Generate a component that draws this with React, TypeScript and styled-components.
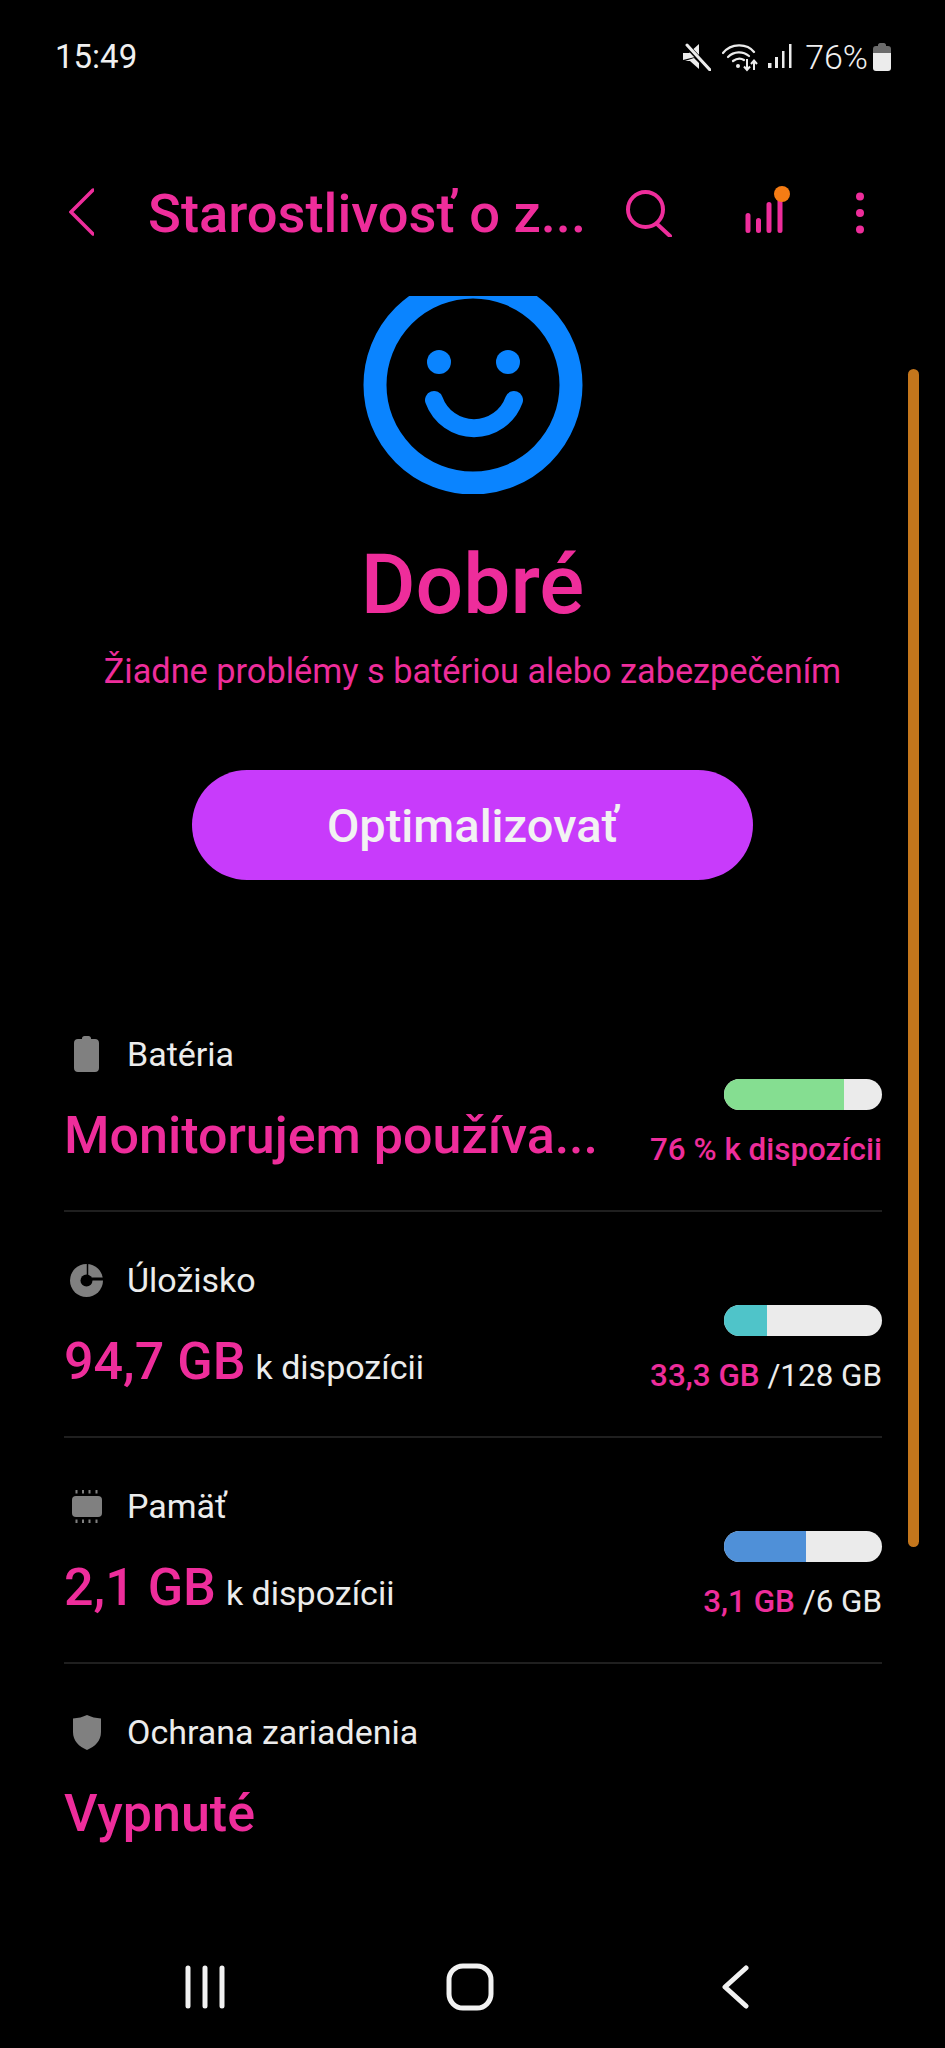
import { FC, ReactNode } from 'react'
import styled, { createGlobalStyle } from 'styled-components'

const PINK = '#ee2d9b'
const GRAY = '#808080'
const LIGHT = '#ececec'

const GlobalStyle = createGlobalStyle`
  html, body {
    margin: 0;
    background: #000;
  }
  * {
    box-sizing: border-box;
  }
`

const Screen = styled.div`
  width: 945px;
  height: 2048px;
  background: #000;
  color: ${LIGHT};
  font-family: Roboto, 'Liberation Sans', sans-serif;
  display: flex;
  flex-direction: column;
  overflow: hidden;
`

const StatusBar = styled.div`
  height: 112px;
  flex: none;
  display: flex;
  align-items: flex-start;
  justify-content: space-between;
  padding: 37px 54px 0 55px;
`

const Time = styled.div`
  font-size: 33px;
  line-height: 40px;
  color: #f0f0f0;
`

const StatusIcons = styled.div`
  display: flex;
  align-items: flex-start;
`

const StatusIcon = styled.svg<{ $gap: number }>`
  display: block;
  flex: none;
  margin: 6px 0 0 ${(p) => p.$gap}px;
`

const BatteryText = styled.div`
  font-size: 34px;
  line-height: 40px;
  font-weight: 300;
  color: #f0f0f0;
  margin-left: 13px;
`

const Header = styled.div`
  height: 184px;
  flex: none;
  display: flex;
  align-items: flex-start;
  padding: 76px 0 0 69px;
`

const HeaderIcon = styled.svg<{ $left: number; $top?: number }>`
  display: block;
  flex: none;
  margin-left: ${(p) => p.$left}px;
  margin-top: ${(p) => p.$top ?? 0}px;
`

const Title = styled.div`
  width: 437px;
  flex: none;
  margin: -1px 0 0 54px;
  font-size: 54.300px;
  line-height: 54px;
  font-weight: 500;
  color: ${PINK};
  white-space: nowrap;
`

const Scroller = styled.div`
  flex: 1;
  position: relative;
  overflow: hidden;
`

const ScrollThumb = styled.div`
  position: absolute;
  left: 908px;
  top: 73px;
  width: 11px;
  height: 1178px;
  border-radius: 6px;
  background: #c4761c;
`

const Hero = styled.div`
  display: flex;
  flex-direction: column;
  align-items: center;
`

const Face = styled.svg`
  display: block;
`

const Mood = styled.div`
  margin-top: 41px;
  font-size: 84px;
  line-height: 100px;
  font-weight: 500;
  color: ${PINK};
`

const Summary = styled.div`
  margin-top: 16px;
  font-size: 34.300px;
  line-height: 40px;
  color: ${PINK};
`

const OptimizeButton = styled.button`
  margin-top: 79px;
  width: 561px;
  height: 110px;
  border: 0;
  border-radius: 55px;
  background: #c83bfb;
  color: #f2f2f2;
  font-family: inherit;
  font-size: 47px;
  font-weight: 500;
`

const List = styled.div`
  margin: 106px 63px 0 64px;
`

const RowWrap = styled.div<{ $last?: boolean }>`
  height: 226px;
  display: flex;
  justify-content: space-between;
  border-bottom: 2px solid ${(p) => (p.$last ? 'transparent' : '#1f1f1f')};
`

const RowLeft = styled.div`
  padding-top: 48px;
`

const RowLabel = styled.div`
  display: flex;
  align-items: center;
  height: 40px;
  font-size: 34px;
  color: ${LIGHT};
`

const IconBox = styled.div`
  width: 45px;
  margin-right: 18px;
  display: flex;
  justify-content: center;
`

const RowValue = styled.div`
  margin-top: 32px;
  font-size: 52px;
  line-height: 60px;
  font-weight: 500;
  color: ${PINK};
  white-space: nowrap;
`

const ValueTail = styled.span`
  font-size: 34px;
  font-weight: 400;
  color: ${LIGHT};
  margin-left: 10px;
`

const RowRight = styled.div`
  padding-top: 93px;
  display: flex;
  flex-direction: column;
  align-items: flex-end;
`

const Bar = styled.div`
  width: 158px;
  height: 31px;
  border-radius: 16px;
  background: #ebebeb;
  overflow: hidden;
`

const BarFill = styled.div<{ $color: string }>`
  height: 100%;
  background: ${(p) => p.$color};
`

const BarText = styled.div`
  margin-top: 20px;
  font-size: 31.400px;
  line-height: 40px;
  color: ${LIGHT};
  white-space: nowrap;
`

const BarStrong = styled.span`
  font-weight: 500;
  color: ${PINK};
`

const NavBar = styled.div`
  height: 134px;
  flex: none;
  display: grid;
  grid-template-columns: repeat(3, 265px);
  justify-content: center;
  justify-items: center;
  padding: 51px 5px 0 0;
`

const NavIcon = styled.svg<{ $top?: number }>`
  display: block;
  margin-top: ${(p) => p.$top ?? 0}px;
`

interface RowProps {
  icon: ReactNode
  label: string
  value: ReactNode
  percent?: number
  color?: string
  info?: ReactNode
  last?: boolean
}

const Row: FC<RowProps> = ({ icon, label, value, percent, color, info, last }) => (
  <RowWrap $last={last}>
    <RowLeft>
      <RowLabel>
        <IconBox>{icon}</IconBox>
        {label}
      </RowLabel>
      <RowValue>{value}</RowValue>
    </RowLeft>
    {percent !== undefined && color && (
      <RowRight>
        <Bar>
          <BarFill $color={color} style={{ width: `${percent}%` }} />
        </Bar>
        <BarText>{info}</BarText>
      </RowRight>
    )}
  </RowWrap>
)

const BatteryIcon = () => (
  <svg width="25" height="36" viewBox="0 0 25 36">
    <path
      fill={GRAY}
      d="M8 2.500C8 1 9 0 10.500 0h4C16 0 17 1 17 2.500V3h4c2.500 0 4 1.500 4 4v25c0 2.500-1.500 4-4 4H4c-2.500 0-4-1.500-4-4V7c0-2.500 1.500-4 4-4h4z"
    />
  </svg>
)

const StorageIcon = () => (
  <svg width="33" height="33" viewBox="0 0 33 33">
    <circle cx="16.500" cy="16.500" r="16.500" fill={GRAY} />
    <circle cx="16.500" cy="16.500" r="6" fill="#000" />
    <path d="M17.500 12V0" stroke="#000" strokeWidth="1.500" />
    <path d="M20 15h13" stroke="#000" strokeWidth="3" />
  </svg>
)

const MemoryIcon = () => (
  <svg width="30" height="33" viewBox="0 0 30 33">
    <rect x="0" y="6" width="30" height="21" rx="4" fill={GRAY} />
    <path
      d="M4.500 0v3.500M11 0v3.500M17.500 0v3.500M24.500 0v3.500M4.500 29.500V33M11 29.500V33M17.500 29.500V33M24.500 29.500V33"
      stroke={GRAY}
      strokeWidth="2"
    />
  </svg>
)

const ShieldIcon = () => (
  <svg width="28" height="35" viewBox="0 0 28 35">
    <path
      fill={GRAY}
      d="M14 0c4 2 9 3.200 14 3.500V17c0 9-6 14.500-14 18C6 31.500 0 26 0 17V3.500C5 3.200 10 2 14 0z"
    />
  </svg>
)

const App: FC = () => (
  <Screen>
    <GlobalStyle />
    <StatusBar>
      <Time>15:49</Time>
      <StatusIcons>
        <StatusIcon $gap={0} width="28" height="28" viewBox="0 0 28 28">
          <path fill="#ececec" d="M0 10h6l10-9v12L0 17z" />
          <path fill="#ececec" d="M2 18h5l9 8v-6l-5-5z" />
          <path d="M4 3l23 24" stroke="#000" strokeWidth="5" />
          <path d="M4 2l23 25" stroke="#ececec" strokeWidth="3" strokeLinecap="round" />
        </StatusIcon>
        <StatusIcon $gap={11} width="37" height="29" viewBox="0 0 37 29">
          <g fill="none" stroke="#ececec" strokeWidth="2.200" strokeLinecap="round">
            <path d="M1 10C9 0 25 0 32 9" />
            <path d="M6 14c6-6 15-6 21-1" />
            <path d="M11 18c4-3 8-3 11-1" />
          </g>
          <circle cx="16" cy="23" r="2" fill="#ececec" />
          <path
            d="M25 16v11M22 23.500l3 3.500 3-3.500M32 27V18M29 21l3-3.500 3 3.500"
            fill="none"
            stroke="#ececec"
            strokeWidth="2"
          />
        </StatusIcon>
        <StatusIcon $gap={9} width="24" height="26" viewBox="0 0 24 26">
          <g fill="#ececec">
            <rect x="0" y="20" width="3.500" height="5" />
            <rect x="7" y="14" width="3" height="11" />
            <rect x="14" y="8" width="2.500" height="17" />
            <rect x="21" y="1" width="2.500" height="24" />
          </g>
        </StatusIcon>
        <BatteryText>76%</BatteryText>
        <StatusIcon $gap={5} width="18" height="28" viewBox="0 0 18 28">
          <path fill="#6b6b6b" d="M5 2c0-1 1-2 2-2h4c1 0 2 1 2 2v1h2c2 0 3 1 3 3v5H0V6c0-2 1-3 3-3h2z" />
          <path fill="#ececec" d="M0 10h18v15c0 2-1 3-3 3H3c-2 0-3-1-3-3z" />
        </StatusIcon>
      </StatusIcons>
    </StatusBar>

    <Header>
      <svg width="25" height="48" viewBox="0 0 25 48">
        <path d="M24 2L2 24l22 22" fill="none" stroke={PINK} strokeWidth="3.500" strokeLinecap="round" />
      </svg>
      <Title>Starostlivosť o z...</Title>
      <HeaderIcon $left={41} $top={2} width="46" height="47" viewBox="0 0 46 47">
        <circle cx="19.500" cy="19.500" r="17.500" fill="none" stroke={PINK} strokeWidth="4" />
        <path d="M31 34l13 12" stroke={PINK} strokeWidth="4" strokeLinecap="round" />
      </HeaderIcon>
      <HeaderIcon $left={72} $top={-3} width="46" height="50" viewBox="0 0 46 50">
        <g stroke={PINK} strokeWidth="5" strokeLinecap="round">
          <path d="M4 30.500v15M14.500 35.500v10M25 19.500v26M36 14v31.500" />
        </g>
        <circle cx="38" cy="9" r="8" fill="#f57c14" />
      </HeaderIcon>
      <HeaderIcon $left={66} $top={4} width="8" height="42" viewBox="0 0 8 42">
        <g fill={PINK}>
          <circle cx="4" cy="4.500" r="4" />
          <circle cx="4" cy="21" r="4" />
          <circle cx="4" cy="37.500" r="4" />
        </g>
      </HeaderIcon>
    </Header>

    <Scroller>
      <Hero>
        <Face width="220" height="198" viewBox="0 0 220 198">
          <circle cx="110" cy="89" r="98" fill="none" stroke="#0a84ff" strokeWidth="23" />
          <circle cx="76" cy="66" r="12" fill="#0a84ff" />
          <circle cx="145" cy="66" r="12" fill="#0a84ff" />
          <path
            d="M71 104A42.500 42.500 0 0 0 151 104"
            fill="none"
            stroke="#0a84ff"
            strokeWidth="18"
            strokeLinecap="round"
          />
        </Face>
        <Mood>Dobré</Mood>
        <Summary>Žiadne problémy s batériou alebo zabezpečením</Summary>
        <OptimizeButton>Optimalizovať</OptimizeButton>
      </Hero>

      <List>
        <Row
          icon={<BatteryIcon />}
          label="Batéria"
          value="Monitorujem používa..."
          percent={76}
          color="#85de91"
          info={<BarStrong>76 % k dispozícii</BarStrong>}
        />
        <Row
          icon={<StorageIcon />}
          label="Úložisko"
          value={
            <>
              94,7 GB
              <ValueTail>k dispozícii</ValueTail>
            </>
          }
          percent={27}
          color="#4fc4c9"
          info={
            <>
              <BarStrong>33,3 GB</BarStrong> /128 GB
            </>
          }
        />
        <Row
          icon={<MemoryIcon />}
          label="Pamäť"
          value={
            <>
              2,1 GB
              <ValueTail>k dispozícii</ValueTail>
            </>
          }
          percent={52}
          color="#4f90d8"
          info={
            <>
              <BarStrong>3,1 GB</BarStrong> /6 GB
            </>
          }
        />
        <Row icon={<ShieldIcon />} label="Ochrana zariadenia" value="Vypnuté" last />
      </List>

      <ScrollThumb />
    </Scroller>

    <NavBar>
      <NavIcon width="40" height="44" viewBox="0 0 40 44">
        <path d="M3 3v38M20 3v38M37 3v38" stroke="#f2f2f2" strokeWidth="5" strokeLinecap="round" />
      </NavIcon>
      <NavIcon $top={-2} width="48" height="48" viewBox="0 0 48 48">
        <rect x="3" y="3" width="42" height="42" rx="14" fill="none" stroke="#f2f2f2" strokeWidth="5" />
      </NavIcon>
      <NavIcon width="28" height="44" viewBox="0 0 28 44">
        <path d="M25 3L4 22l21 19" fill="none" stroke="#f2f2f2" strokeWidth="5" strokeLinecap="round" strokeLinejoin="round" />
      </NavIcon>
    </NavBar>
  </Screen>
)

export default App
